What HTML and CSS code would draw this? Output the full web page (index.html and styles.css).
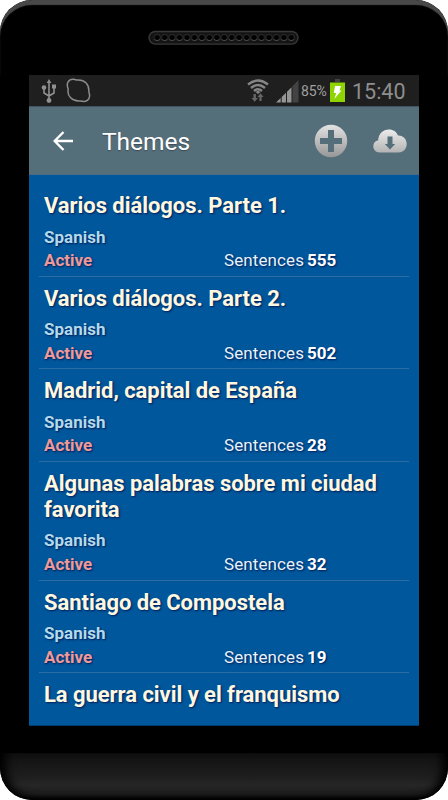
FILE: index.html
```html
<!DOCTYPE html>
<html lang="en">
<head>
	<meta charset="UTF-8">
	<title>Themes</title>
	<link rel="stylesheet" href="styles.css">
</head>
<body>
	<div class="phone">
		<div class="top">
			<svg class="speaker" width="152" height="16" viewBox="0 0 152 16">
				<defs>
					<pattern id="holes" x="5.5" y="3" width="7.45" height="9" patternUnits="userSpaceOnUse">
						<circle cx="3.7" cy="4.5" r="3.1" fill="#000" stroke="#2a2a2a" stroke-width="1"/>
						<path d="M1 6a3.1 3.1 0 0 0 5.4 0" fill="none" stroke="#4c4c4c" stroke-width=".9"/>
					</pattern>
				</defs>
				<rect x="1" y="1.5" width="149" height="12.6" rx="6.3" fill="#141414" stroke="#383838" stroke-width="1.4"/>
				<rect x="5.5" y="3.500" width="141.5" height="9" fill="url(#holes)"/>
			</svg>
		</div>
		<div class="screen">
			<div class="status">
				<!-- usb -->
				<svg class="usb" width="16" height="24" viewBox="0 0 16 24" fill="none" stroke="#909090" stroke-width="1.6">
					<path d="M8 3v18M3 9v5l5 3M13 8v6l-5 3"/>
					<path d="M8 0l2.300 4H5.700z" fill="#909090" stroke="none"/>
					<circle cx="8" cy="21.500" r="2.400" fill="#909090" stroke="none"/>
					<circle cx="3" cy="8.500" r="2.300" fill="#909090" stroke="none"/>
					<path d="M11 5.500h4v4h-4z" fill="#909090" stroke="none"/>
				</svg>
				<svg class="blob" width="25" height="25" viewBox="0 0 25 25" fill="none" stroke="#8c8c8c" stroke-width="1.5">
					<path d="M2.200 11C-.2 5.500 2.500 1 7.500 1.300C9.500 1.400 10 2.100 12 2C18.500 1.700 23 6 22.800 12.500C22.700 14.500 23.700 15.500 23.600 18C23.300 22 20.500 24.200 16.500 23.200C15 22.800 14 23 12.500 22.900C6 22.700 1.500 18 2 12.500z"/>
				</svg>
				<!-- wifi -->
				<svg class="wifi" width="22" height="24" viewBox="0 0 22 24">
					<g fill="none" stroke="#858585" stroke-width="2.400">
						<path d="M1 5.500Q11-2.500 21 5.500"/>
						<path d="M4 9Q11 3 18 9"/>
						<path d="M7 12Q11 8.500 15 12"/>
					</g>
					<path d="M8.500 13l2.500-1.600 2.500 1.600-2.500 2z" fill="#858585"/>
					<path d="M6.500 15h2.400v4h2L7.700 22.800 4.500 19h2zM12.400 22h2.200v-4h2l-3.100-3.800-3.100 3.800h2z" fill="#666"/>
				</svg>
				<!-- signal -->
				<svg class="signal" width="23" height="23" viewBox="0 0 23 23">
					<path d="M0 22.500L4.700 18v4.500zM5.700 17L10 12.700v9.800H5.700zM11 11.700l4.500-4.500v15.300H11z" fill="#959595"/>
					<path d="M16.500 6.200L22.500 0v22.500h-6z" fill="#434343"/>
				</svg>
				<span class="percent">85%</span>
				<svg class="battery" width="15" height="23" viewBox="0 0 15 23">
					<path d="M5 0h5v3H5z" fill="#444"/>
					<path d="M0 3.500h15V23H0z" fill="#8fd400"/>
					<path d="M5 7h6L9.500 11.500h2L4.300 20l2-6H3.800z" fill="#fff"/>
				</svg>
				<span class="clock">15:40</span>
			</div>
			<div class="bar">
				<svg class="back" width="20" height="20" viewBox="0 0 20 20" fill="none" stroke="#fff" stroke-width="2.400">
					<path d="M20 10H2M10.500 1L1.700 10l8.800 9"/>
				</svg>
				<h1>Themes</h1>
				<svg class="add" width="34" height="34" viewBox="0 0 34 34">
					<defs>
						<linearGradient id="metal" x1="0" y1="0" x2="0" y2="1">
							<stop offset="0" stop-color="#e2e2e2"/>
							<stop offset="1" stop-color="#979797"/>
						</linearGradient>
					</defs>
					<circle cx="17" cy="17" r="16.200" fill="url(#metal)"/>
					<path d="M14 6h6v8h8v6h-8v8h-6v-8H6v-6h8z" fill="#546e7a"/>
				</svg>
				<svg class="cloud" width="34" height="24" viewBox="0 0 34 24">
					<defs>
						<linearGradient id="cloud" x1="0" y1="0" x2="0" y2="1">
							<stop offset="0" stop-color="#ececec"/>
							<stop offset="1" stop-color="#b4b4b4"/>
						</linearGradient>
					</defs>
					<path d="M6.500 23.500C2.500 23.500.3 20.500.3 17.300c0-3.300 2-5.500 4.900-6C5.300 5 10 .5 16 .5c4.300 0 7.600 2.300 9 6 5.300-.2 8.700 3.700 8.700 8.500 0 4.700-3.200 8.500-8 8.500z" fill="url(#cloud)"/>
					<path d="M14.500 7.500h5v7.500h2.700L17 20.500 11.800 15h2.700z" fill="#546e7a"/>
				</svg>
			</div>
			<ul class="list">
				<li>
					<h2>Varios diálogos. Parte 1.</h2>
					<p class="lang">Spanish</p>
					<div class="info"><span class="active">Active</span><span class="label">Sentences</span><b>555</b></div>
				</li>
				<li>
					<h2>Varios diálogos. Parte 2.</h2>
					<p class="lang">Spanish</p>
					<div class="info"><span class="active">Active</span><span class="label">Sentences</span><b>502</b></div>
				</li>
				<li>
					<h2>Madrid, capital de España</h2>
					<p class="lang">Spanish</p>
					<div class="info"><span class="active">Active</span><span class="label">Sentences</span><b>28</b></div>
				</li>
				<li>
					<h2>Algunas palabras sobre mi ciudad<br>favorita</h2>
					<p class="lang">Spanish</p>
					<div class="info"><span class="active">Active</span><span class="label">Sentences</span><b>32</b></div>
				</li>
				<li>
					<h2>Santiago de Compostela</h2>
					<p class="lang">Spanish</p>
					<div class="info"><span class="active">Active</span><span class="label">Sentences</span><b>19</b></div>
				</li>
				<li>
					<h2>La guerra civil y el franquismo</h2>
				</li>
			</ul>
		</div>
		<div class="chin"></div>
	</div>
</body>
</html>
```
FILE: styles.css
```css
* {
    margin: 0;
    padding: 0;
    box-sizing: border-box;
}
body {
    background-color: #fff;
    font-family: Roboto, "Liberation Sans", sans-serif;
}
.phone {
    width: 448px;
    height: 800px;
    display: flex;
    flex-direction: column;
    align-items: center;
    overflow: hidden;
    border-radius: 32px;
    background-color: #000;
}
.top {
    width: 448px;
    height: 75px;
    padding-top: 30px;
    border-radius: 32px 32px 0 0;
    box-shadow: inset 0 5px 1px #484848;
}
.speaker {
    display: block;
    margin: 0 auto;
}
.screen {
    width: 390px;
    height: 651px;
    overflow: hidden;
    background-color: #01579b;
    border-bottom: 1px solid #003c70;
}
/* status bar */
.status {
    height: 31px;
    display: flex;
    align-items: center;
    padding: 0 13px 0 12px;
    background-color: #1f1f1f;
    color: #8e8e8e;
}
.blob {
    margin-left: 9px;
}
.wifi {
    margin-left: auto;
}
.signal {
    margin: 1px 2px 0 7px;
}
.percent {
    width: 28px;
    padding-top: 1px;
    font-size: 14px;
    letter-spacing: -.1px;
    color: #a0a0a0;
}
.battery {
    margin: 0 7px 0 1px;
}
.clock {
    width: 54px;
    padding-top: 1px;
    font-size: 21.5px;
    white-space: nowrap;
}
/* action bar */
.bar {
    height: 69px;
    display: flex;
    align-items: center;
    padding: 0 12px 0 24px;
    background-color: #546e7a;
    border-top: 1px solid #40555f;
    border-bottom: 1px solid #4a6b83;
}
.bar h1 {
    margin-left: 29px;
    padding-top: 1px;
    font-size: 24.5px;
    font-weight: 400;
    color: #fff;
    text-shadow: 0 1px 1px rgba(0,0,0,.3);
}
.add {
    margin-left: auto;
}
.cloud {
    margin-left: 25px;
}
/* theme list */
.list {
    list-style: none;
    padding: 9px 10px 0;
}
.list li {
    padding: 9.3px 5px 3.1px;
    border-bottom: 1px solid #2d6da5;
    text-shadow: 1px 1px 2px rgba(0,0,60,.7);
}
.list li:last-child {
    border-bottom: none;
}
.list h2 {
    margin-bottom: 6px;
    font-size: 22px;
    line-height: 26.200px;
    font-weight: 700;
    letter-spacing: -.05px;
    color: #fff8e1;
    white-space: nowrap;
}
.lang {
    font-size: 17px;
    line-height: 23.500px;
    font-weight: 700;
    color: #b3daec;
}
.info {
    display: grid;
    grid-template-columns: 180px 83px 1fr;
    font-size: 17px;
    line-height: 23.500px;
}
.active {
    font-weight: 700;
    color: #ef9a9a;
}
.label {
    letter-spacing: .1px;
    color: #e8f2fb;
}
.info b {
    color: #fff;
}
.chin {
    width: 448px;
    height: 47px;
    margin-top: 27px;
    border-radius: 0 0 32px 32px;
    background: linear-gradient(#101010, #1e1e1e 50%, #262626 68%, #1c1c1c 88%, #000);
    box-shadow: inset 10px -2px 10px -4px #000, inset -10px -2px 10px -4px #000;
}
```
